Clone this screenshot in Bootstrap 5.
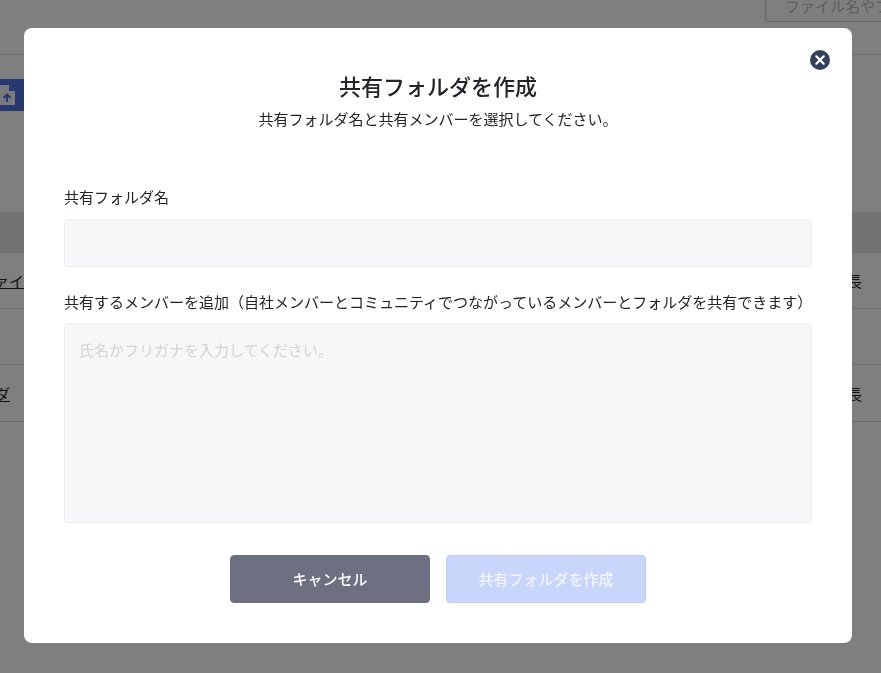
<!DOCTYPE html>
<html lang="ja">
<head>
<meta charset="utf-8">
<title>共有フォルダを作成</title>
<link href="https://cdn.jsdelivr.net/npm/bootstrap@5.3.0/dist/css/bootstrap.min.css" rel="stylesheet">
<style>
html, body { height: 100%; overflow: hidden; }
body { font-family: "Noto Sans CJK JP", "Noto Sans", sans-serif; font-size: 15px; color: #212529; background: #fff; }
.top-strip { height: 55px; border-bottom: 1px solid #dcdcdc; }
.search-box { width: 116px; height: 22px; margin-left: 765px; border: 1px solid #ccc; border-width: 0 0 1px 1px; border-radius: 0 0 0 4px; color: #bdbdbd; font-size: 15px; line-height: 12px; white-space: nowrap; overflow: hidden; padding-left: 19px; }
.upload-tab { width: 24px; height: 32px; margin-top: 24px; background: #4b72e0; padding-top: 6px; }
.upload-tab svg { display: block; }
.file-head { height: 41px; margin-top: 101px; background: #e4e4e4; }
.file-row { height: 56px; border-bottom: 1px solid #d8d8d8; display: flex; justify-content: space-between; align-items: center; padding-top: 2px; }
.file-row a { color: #212529; white-space: nowrap; }
.link-a { margin-left: -21px; }
.link-b { margin-left: -5px; }
.file-row span { margin-right: 19px; }
.file-row.last-row { height: 57px; }
.file-gap { height: 56px; border-bottom: 1px solid #d8d8d8; }
.sheet-wrap { max-width: 828px; margin: 28px 0 0 24px; }
.sheet { height: 615px; border: 0; border-radius: 8px; padding: 0 40px; }
.sheet-close { position: absolute; top: 22px; right: 22px; width: 20px; height: 20px; padding: 0; border: 0; background: none; display: block; }
.sheet-close svg { display: block; }
.sheet-title { font-size: 22px; font-weight: 500; line-height: 30px; margin: 42px 0 0; text-align: center; }
.sheet-sub { line-height: 22px; margin: 8px 0 0; text-align: center; }
.field-label { display: block; font-weight: 400; line-height: 22px; margin: 0 0 11px; color: #212529; white-space: nowrap; }
.name-label { margin-top: 56px; }
.member-label { margin-top: 24px; }
.field-box { display: block; width: 100%; background: #f6f7f9; border: 1px solid #ebecee; border-radius: 4px; box-shadow: none; font-size: 15px; }
.name-box { height: 48px; }
.member-box { height: 200px; padding: 14px 14px; resize: none; line-height: 24px; margin-top: -1px; }
.member-box::placeholder { color: #d2d3d5; opacity: 1; }
.sheet-actions { margin-top: 32px; gap: 16px; }
.act-btn { width: 200px; height: 48px; font-size: 15px; font-weight: 500; border-radius: 4px; padding: 0; }
.act-cancel, .act-cancel:hover { background: #6d7080; border-color: #6d7080; color: #fff; }
.act-create, .act-create:disabled { background: #c7d6fa; border-color: #bccdf6; color: #f2f5fe; opacity: 1; }
</style>
</head>
<body>
<div class="top-strip"><div class="search-box">ファイル名やフォルダ</div></div>
<div class="upload-tab">
  <svg width="18" height="20" viewBox="0 0 18 20" fill="none" aria-hidden="true">
    <path d="M0 0H9L15 6V20H0Z" fill="#f4f5f8"/>
    <path d="M9 0L15 6H9Z" fill="#4b72e0"/>
    <path d="M7 17V9.5M3.5 13L7 9.5L10.5 13" stroke="#4b72e0" stroke-width="2"/>
  </svg>
</div>
<div class="file-head"></div>
<div class="file-row"><a class="link-a" href="#">ファイ</a><span>長</span></div>
<div class="file-gap"></div>
<div class="file-row last-row"><a class="link-b" href="#">ダ</a><span>長</span></div>

<div class="modal-backdrop show"></div>
<div class="modal d-block" role="dialog" aria-modal="true">
  <div class="modal-dialog sheet-wrap">
    <div class="modal-content sheet">
      <button type="button" class="sheet-close" aria-label="閉じる">
        <svg width="20" height="20" viewBox="0 0 20 20" aria-hidden="true">
          <circle cx="10" cy="10" r="10" fill="#35405f"/>
          <path d="M6.3 6.3L13.7 13.7M13.7 6.3L6.3 13.7" stroke="#fff" stroke-width="2.2" stroke-linecap="round"/>
        </svg>
      </button>
      <h1 class="sheet-title">共有フォルダを作成</h1>
      <p class="sheet-sub">共有フォルダ名と共有メンバーを選択してください。</p>
      <label class="field-label name-label" for="fname">共有フォルダ名</label>
      <input id="fname" class="form-control field-box name-box" type="text">
      <label class="field-label member-label" for="fmember">共有するメンバーを追加（自社メンバーとコミュニティでつながっているメンバーとフォルダを共有できます）</label>
      <textarea id="fmember" class="form-control field-box member-box" placeholder="氏名かフリガナを入力してください。"></textarea>
      <div class="d-flex justify-content-center sheet-actions">
        <button type="button" class="btn act-btn act-cancel">キャンセル</button>
        <button type="button" class="btn act-btn act-create" disabled>共有フォルダを作成</button>
      </div>
    </div>
  </div>
</div>
<script src="https://cdn.jsdelivr.net/npm/bootstrap@5.3.0/dist/js/bootstrap.bundle.min.js"></script>
</body>
</html>
